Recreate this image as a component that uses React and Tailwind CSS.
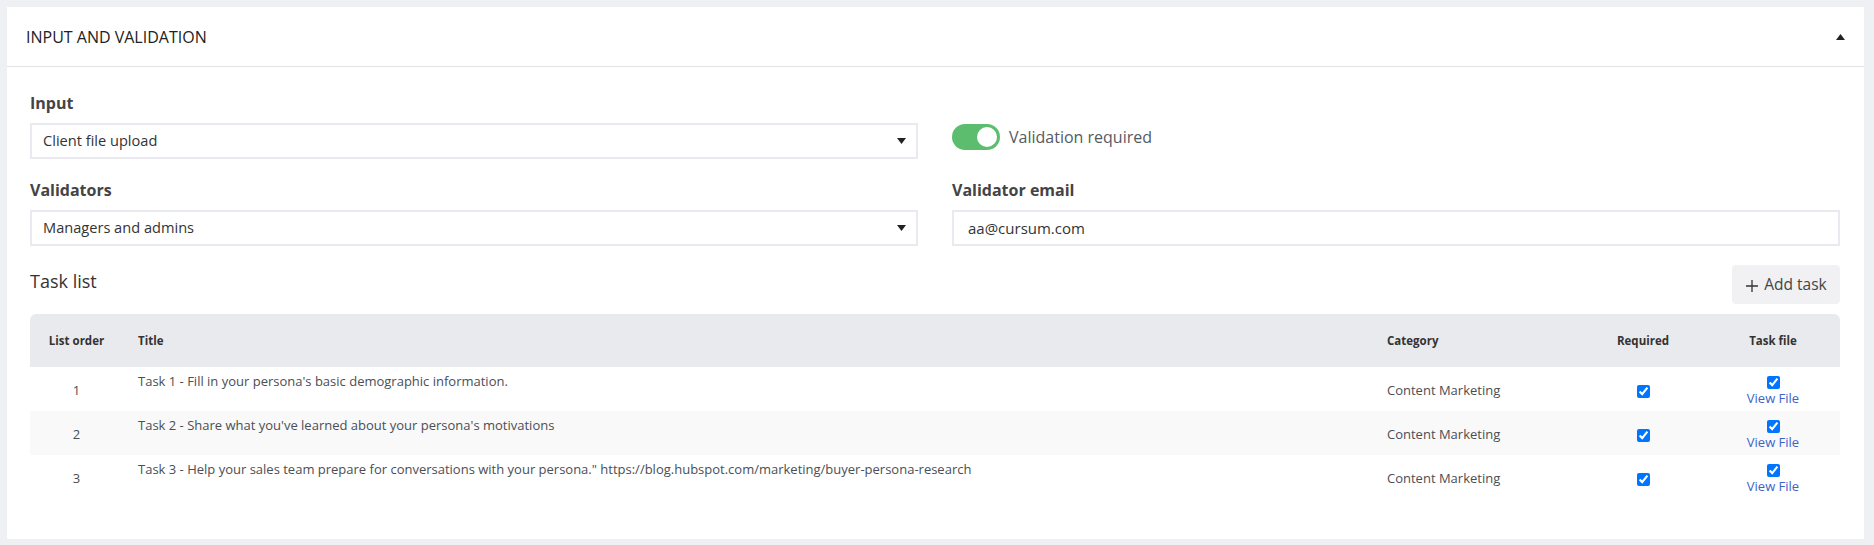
import React from 'react';

const tasks = [
  { order: 1, title: "Task 1 - Fill in your persona's basic demographic information.", category: 'Content Marketing' },
  { order: 2, title: "Task 2 - Share what you've learned about your persona's motivations", category: 'Content Marketing' },
  { order: 3, title: 'Task 3 - Help your sales team prepare for conversations with your persona." https://blog.hubspot.com/marketing/buyer-persona-research', category: 'Content Marketing' },
];

function Caret({ up }) {
  return (
    <svg width="9" height="6" viewBox="0 0 9 6" className="shrink-0">
      {up ? <path d="M0 6 L4.5 0 L9 6 Z" fill="#222" /> : <path d="M0 0 L9 0 L4.5 6 Z" fill="#222" />}
    </svg>
  );
}

function Label({ children }) {
  return <div className="h-[22px] mb-[9px] text-[16px] leading-[22px] font-bold text-[#444]">{children}</div>;
}

function SelectBox({ value }) {
  return (
    <div className="h-[36px] border-2 border-[#e9eaef] flex items-center justify-between pl-[11px] pr-[10px] text-[14.6px] text-[#333]">
      <span>{value}</span>
      <Caret />
    </div>
  );
}

export default function App() {
  return (
    <div className="min-h-screen bg-[#eff0f3] pt-[7px] pl-[7px] pr-[10px] pb-[6px]" style={{ fontFamily: '"Open Sans", "Noto Sans", sans-serif' }}>
      <div className="bg-white h-[532px]">
        {/* Header */}
        <div className="h-[60px] flex items-center justify-between pl-[19px] pr-[19px] border-b border-[#e2e3e7]">
          <h2 className="text-[16px] font-medium uppercase text-[#222]">Input and validation</h2>
          <Caret up />
        </div>

        {/* Body */}
        <div className="pl-[23px] pr-[24px] pt-[25px] pb-[40px]">
          <div className="grid grid-cols-2 gap-x-[34px]">
            <div>
              <Label>Input</Label>
              <SelectBox value="Client file upload" />
            </div>
            <div className="pt-[31px] h-[67px] flex items-center">
              <div className="flex items-center gap-[9px] -mt-[8px]">
                <div className="w-[48px] h-[26px] rounded-full bg-[#5dbd6f] flex items-center justify-end px-[3px]">
                  <div className="w-[20px] h-[20px] rounded-full bg-white" />
                </div>
                <span className="text-[16px] text-[#555a62]">Validation required</span>
              </div>
            </div>

            <div className="mt-[20px]">
              <Label>Validators</Label>
              <SelectBox value="Managers and admins" />
            </div>
            <div className="mt-[20px]">
              <Label>Validator email</Label>
              <div className="h-[36px] border-2 border-[#e9eaef] flex items-center pl-[14px] text-[15px] text-[#333]">
                aa@cursum.com
              </div>
            </div>
          </div>

          {/* Task list */}
          <div className="mt-[19px] flex items-center justify-between">
            <h3 className="text-[18px] text-[#333] pb-[6px]">Task list</h3>
            <button className="h-[39px] w-[108px] rounded-[4px] bg-[#f1f1f3] flex items-center justify-center gap-[5px] text-[15.5px] text-[#444]">
              <svg width="14" height="14" viewBox="0 0 14 14" className="mt-[2px]">
                <path d="M7 1 V13 M1 7 H13" stroke="#333" strokeWidth="1.3" fill="none" />
              </svg>
              Add task
            </button>
          </div>

          <div className="mt-[10px] rounded-t-[6px] overflow-hidden">
            <table className="w-full table-fixed border-collapse">
              <colgroup>
                <col className="w-[93px]" />
                <col />
                <col className="w-[208px]" />
                <col className="w-[126px]" />
                <col className="w-[134px]" />
              </colgroup>
              <thead>
                <tr className="bg-[#e9eaee] h-[53px] text-[11.5px] font-bold text-[#333]">
                  <th className="text-center font-bold">List order</th>
                  <th className="text-left pl-[15px] font-bold">Title</th>
                  <th className="text-left pl-[15px] font-bold">Category</th>
                  <th className="text-center font-bold">Required</th>
                  <th className="text-center font-bold">Task file</th>
                </tr>
              </thead>
              <tbody>
                {tasks.map((t, i) => (
                  <tr key={t.order} className={`h-[44px] text-[13px] text-[#4a4e55] ${i % 2 === 1 ? 'bg-[#f9f9f9]' : 'bg-white'}`}>
                    <td className="text-center align-middle pt-[3px]">{t.order}</td>
                    <td className="pl-[15px] align-top pt-[5px] leading-[18px]">{t.title}</td>
                    <td className="pl-[15px] align-middle pt-[3px]">{t.category}</td>
                    <td className="text-center align-middle pt-[4px]">
                      <input type="checkbox" checked readOnly className="w-[13px] h-[13px] m-0 align-middle" />
                    </td>
                    <td className="text-center align-middle pt-[4px]">
                      <div className="flex flex-col items-center">
                        <input type="checkbox" checked readOnly className="w-[13px] h-[13px] m-0" />
                        <a className="text-[13px] leading-[17px] text-[#3d63c9] mt-[1px]">View File</a>
                      </div>
                    </td>
                  </tr>
                ))}
              </tbody>
            </table>
          </div>
        </div>
      </div>
    </div>
  );
}
